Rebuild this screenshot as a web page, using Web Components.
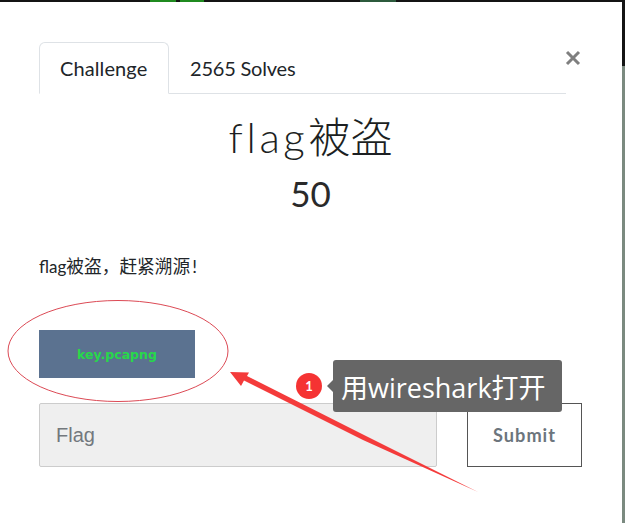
<!DOCTYPE html>
<html><head><meta charset="utf-8"><style>
html,body{margin:0;padding:0;background:#fff;height:523px;overflow:hidden}
body{font-family:Lato,"Noto Sans CJK SC",sans-serif;color:#212529}
</style></head><body>
<ctf-modal>
  <ctf-tabs slot="tabs"><span>Challenge</span><span>2565 Solves</span></ctf-tabs>
  <ctf-heading><span style="letter-spacing:3.6px">flag</span>被盗<span slot="value">50</span></ctf-heading>
  <ctf-desc><span style="font-size:17px">flag</span>被盗，赶紧溯源<span style="margin-left:2px">!</span></ctf-desc>
  <ctf-file>key.pcapng</ctf-file>
  <ctf-form></ctf-form>
  <ctf-annotation></ctf-annotation>
</ctf-modal>
<script>
function def(name,html){customElements.define(name,class extends HTMLElement{constructor(){super();this.attachShadow({mode:'open'}).innerHTML=html;}});}
def('ctf-modal',`<style>
:host{display:flex;flex-direction:column;position:relative;width:625px;height:523px;box-sizing:border-box;background:#fff}
.top{height:2px;flex:none;background:linear-gradient(90deg,#141414 150px,#1f8a1f 150px,#1f8a1f 176px,#141414 176px,#141414 180px,#1f8a1f 180px,#1f8a1f 204px,#141414 204px,#141414 360px,#2c5a3c 360px,#2c5a3c 396px,#141414 396px)}
.edge{position:absolute;top:0;right:0;width:3px;height:523px;background:linear-gradient(#141414 0,#141414 66px,#7b8a80 66px,#7b8a80 100%)}
.body{flex:1;padding:40px 43px 0 39px;display:flex;flex-direction:column}
.x{position:absolute;left:565px;top:50px;width:16px;height:16px}
</style><div class="top"></div><div class="body"><slot name="tabs"></slot><slot></slot></div>
<svg class="x" viewBox="0 0 16 16"><path d="M2 2L14 14M14 2L2 14" stroke="#7f7f7f" stroke-width="3"/></svg><div class="edge"></div>`);
def('ctf-tabs',`<style>
:host{display:flex;height:52px;box-sizing:border-box;border-bottom:1px solid #dee2e6;font-size:20px;line-height:24px;width:527px}
::slotted(span){box-sizing:border-box;height:52px;padding:13px 20px;border:1px solid transparent;white-space:nowrap;letter-spacing:-.2px}
::slotted(span:first-child){background:#fff;border-color:#dee2e6 #dee2e6 #fff;border-radius:6px 6px 0 0;width:130px;letter-spacing:.1px}
</style><slot></slot>`);
def('ctf-heading',`<style>
:host{display:flex;flex-direction:column;align-items:center}
h2{margin:13px 0 0;font:300 42px/60px Lato,"Noto Sans CJK SC",sans-serif;color:#1c1f22}
h3{margin:5px 0 0;font:400 35px/42px Lato,"Noto Sans CJK SC",sans-serif;color:#2a2a2a}
</style><h2><slot></slot></h2><h3><slot name="value"></slot></h3>`);
def('ctf-desc',`<style>:host{display:block;margin-top:41px;font-size:17.7px;line-height:24px;height:75px}</style><slot></slot>`);
def('ctf-file',`<style>:host{display:flex;align-items:center;justify-content:center;width:156px;height:48px;background:#5b7290;color:#27d94a;font:700 12.5px "DejaVu Sans",sans-serif}</style><slot></slot>`);
def('ctf-form',`<style>
:host{display:flex;gap:30px;margin-top:25px;height:64px}
.i{box-sizing:border-box;width:398px;height:64px;background:#efefef;border:1px solid #ccc;border-radius:2px;padding:0 16px;display:flex;align-items:center;color:#73787d;font:20px "Liberation Sans",sans-serif}
.b{box-sizing:border-box;width:115px;height:64px;border:1px solid #555;background:#fff;display:flex;align-items:center;justify-content:center;color:#6c757d;font:700 18.2px Lato,sans-serif;letter-spacing:1px}
</style><div class="i">Flag</div><div class="b">Submit</div>`);
def('ctf-annotation',`<style>
:host{position:absolute;left:0;top:0;width:625px;height:523px;pointer-events:none}
svg{position:absolute;left:0;top:0}
.tip{position:absolute;left:333px;top:360px;width:229px;height:52px;box-sizing:border-box;background:#666;border-radius:3px;color:#fff;font:27px/56px "Open Sans","Noto Sans CJK SC",sans-serif;padding-left:8px;white-space:nowrap}
.tip::before{content:"";position:absolute;left:-6px;top:20px;border:6px solid transparent;border-left:0;border-right-color:#666}
.n{position:absolute;left:296px;top:373px;width:26px;height:26px;border-radius:50%;background:#f53333;color:#fff;font:700 13px/26px Lato,sans-serif;text-align:center}
</style>
<svg width="625" height="523" viewBox="0 0 625 523">
<ellipse cx="118" cy="351" rx="110" ry="50.5" fill="none" stroke="#dc4a55" stroke-width="1"/>
<path d="M230 372L249 372.5L247 376L363 434.5L478 492L363 440L244 380.5L241 386Z" fill="#f43b3b"/>
</svg><div class="n">1</div><div class="tip">用wireshark打开</div>`);
</script></body></html>
